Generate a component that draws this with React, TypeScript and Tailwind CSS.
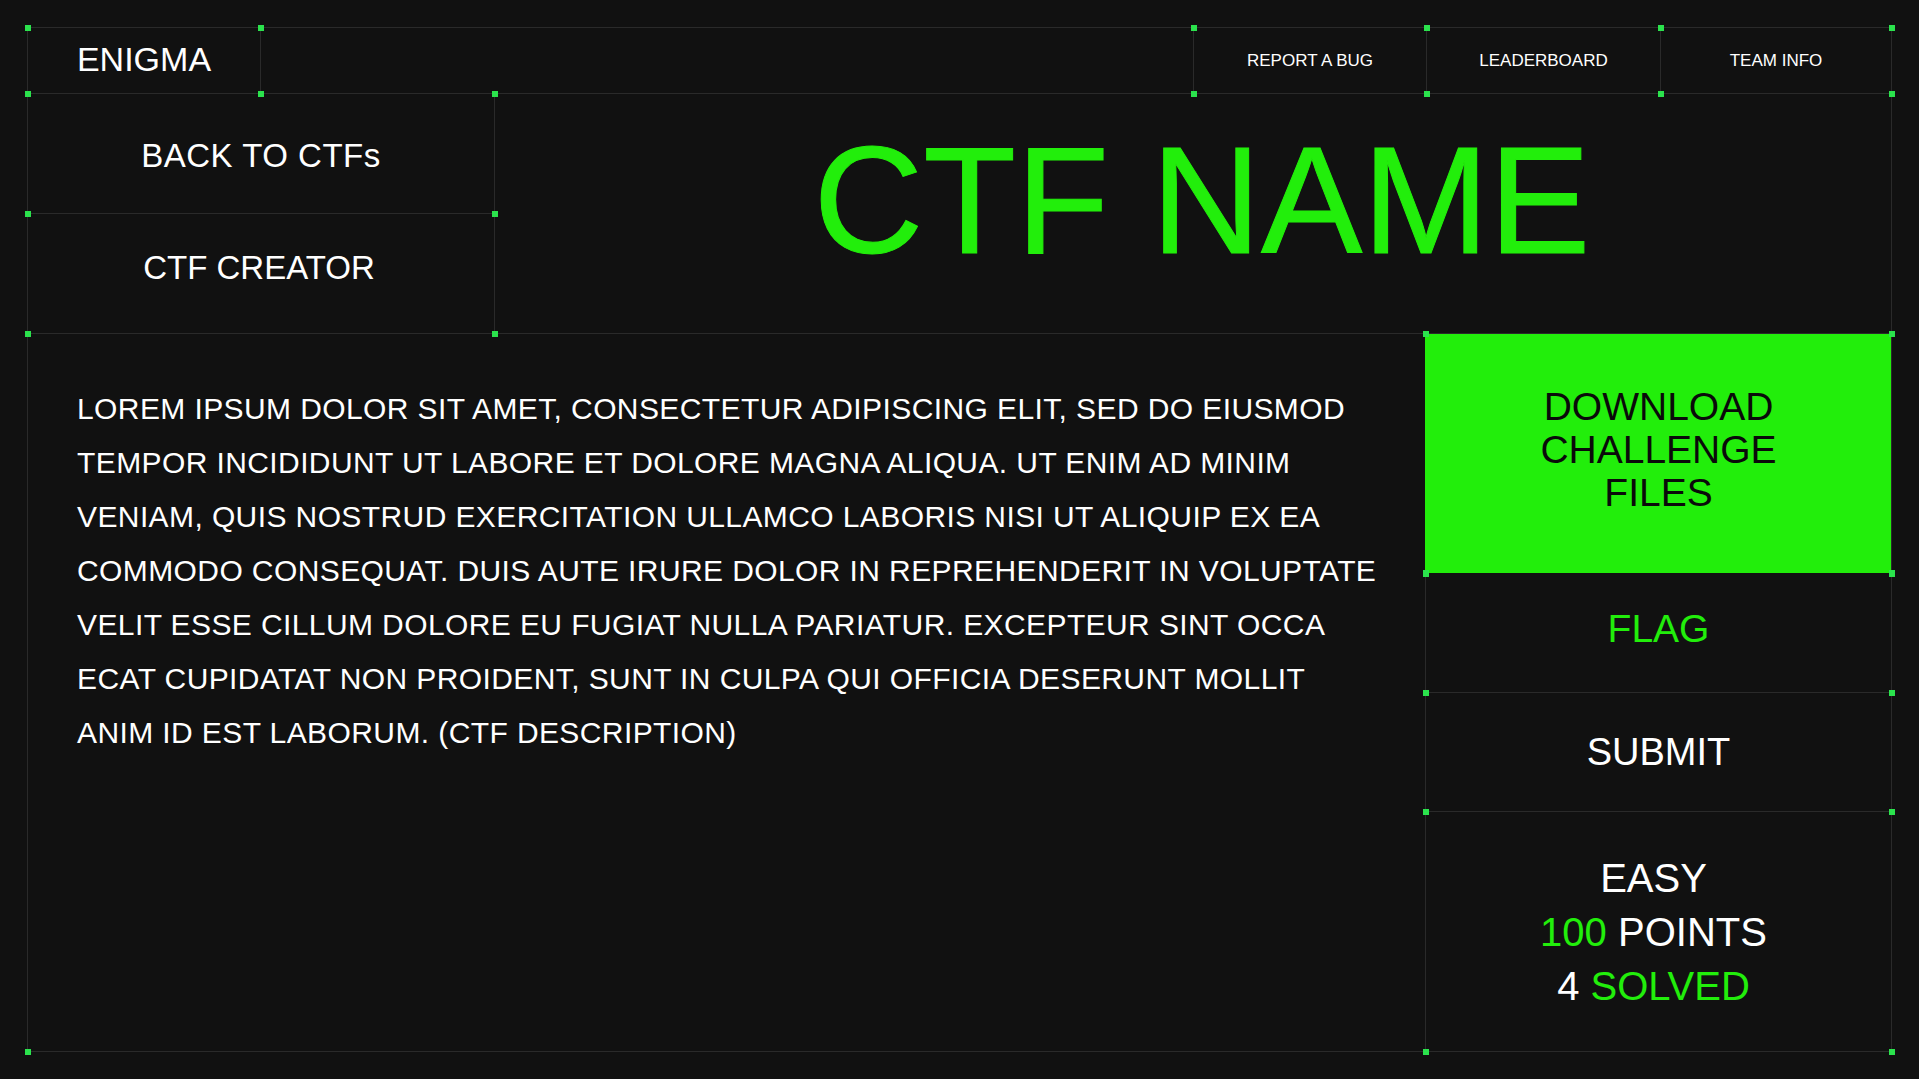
import React from "react";

const LINES = [
  "LOREM IPSUM DOLOR SIT AMET, CONSECTETUR ADIPISCING ELIT, SED DO EIUSMOD",
  "TEMPOR INCIDIDUNT UT LABORE ET DOLORE MAGNA ALIQUA. UT ENIM AD MINIM",
  "VENIAM, QUIS NOSTRUD EXERCITATION ULLAMCO LABORIS NISI UT ALIQUIP EX EA",
  "COMMODO CONSEQUAT. DUIS AUTE IRURE DOLOR IN REPREHENDERIT IN VOLUPTATE",
  "VELIT ESSE CILLUM DOLORE EU FUGIAT NULLA PARIATUR. EXCEPTEUR SINT OCCA",
  "ECAT CUPIDATAT NON PROIDENT, SUNT IN CULPA QUI OFFICIA DESERUNT MOLLIT",
  "ANIM ID EST LABORUM. (CTF DESCRIPTION)",
];

const NAV = [
  { label: "REPORT A BUG", w: "w-[233px]" },
  { label: "LEADERBOARD", w: "w-[234px]" },
  { label: "TEAM INFO", w: "w-[231px]" },
];

// little green squares sitting on the grid intersections
function Dot({ pos }: { pos: string }) {
  return <span className={`absolute z-10 h-[6px] w-[6px] bg-[#2be34d] ${pos}`} />;
}

function Corners() {
  return (
    <>
      <Dot pos="-left-[3px] -top-[3px]" />
      <Dot pos="-right-[4px] -top-[3px]" />
      <Dot pos="-left-[3px] -bottom-[4px]" />
      <Dot pos="-right-[4px] -bottom-[4px]" />
    </>
  );
}

export default function App() {
  return (
    <div className="h-[1079px] w-[1919px] bg-[#111111] p-[27px] font-['Liberation_Sans',Arial,sans-serif] text-white">
      <div className="flex h-[1025px] w-[1865px] flex-col border border-[#2a2a2a]">
        {/* Header */}
        <div className="flex h-[66px] shrink-0 border-b border-[#2a2a2a]">
          <div className="relative flex w-[233px] items-center justify-center border-r border-[#2a2a2a] pb-[3px] text-[34px] leading-none">
            <Corners />
            ENIGMA
          </div>
          <div className="flex-1" />
          {NAV.map((n) => (
            <div
              key={n.label}
              className={`relative flex items-center justify-center border-l border-[#2a2a2a] text-[17px] leading-none ${n.w}`}
            >
              <Corners />
              {n.label}
            </div>
          ))}
        </div>

        {/* Sidebar + title */}
        <div className="flex h-[240px] shrink-0 border-b border-[#2a2a2a]">
          <div className="flex w-[467px] flex-col border-r border-[#2a2a2a]">
            <div className="relative flex h-[120px] items-center justify-center border-b border-[#2a2a2a] pt-[4px] text-[33px] leading-none tracking-[0.5px]">
              <Corners />
              BACK TO CTFs
            </div>
            <div className="relative flex flex-1 items-center justify-center pb-[12px] pr-[4px] text-[33px] leading-none">
              <Corners />
              CTF CREATOR
            </div>
          </div>
          <div className="flex flex-1 items-center justify-center pb-[28px] pl-[18px]">
            <h1 className="text-[152px] leading-none text-[#22ee0b] [-webkit-text-stroke:1px_#22ee0b]">CTF NAME</h1>
          </div>
        </div>

        {/* Description + actions */}
        <div className="flex flex-1">
          <div className="relative flex-1 pl-[49px] pt-[48px]">
            <Dot pos="-left-[3px] -bottom-[4px]" />
            {LINES.map((l) => (
              <p key={l} className="text-[30px] leading-[54px] tracking-[0.4px]">
                {l}
              </p>
            ))}
          </div>

          <div className="flex w-[466px] flex-col">
            <button className="relative flex h-[239px] flex-col items-center justify-center border-l border-[#22ee0b] bg-[#22ee0b] pb-[8px] text-[39px] leading-[43px] text-[#0a0a0a]">
              <Corners />
              <span>DOWNLOAD</span>
              <span>CHALLENGE</span>
              <span>FILES</span>
            </button>
            <div className="relative flex h-[120px] items-center justify-center border-b border-l border-[#2a2a2a] pb-[8px] text-[39px] leading-none text-[#22ee0b]">
              <Corners />
              FLAG
            </div>
            <div className="relative flex h-[119px] items-center justify-center border-b border-l border-[#2a2a2a] text-[38px] leading-none">
              <Corners />
              SUBMIT
            </div>
            <div className="relative flex flex-1 flex-col items-center justify-center border-l border-[#2a2a2a] pr-[10px] text-[40px] leading-[54px]">
              <Corners />
              <span>EASY</span>
              <span>
                <span className="text-[#22ee0b]">100</span> POINTS
              </span>
              <span>
                4 <span className="text-[#22ee0b]">SOLVED</span>
              </span>
            </div>
          </div>
        </div>
      </div>
    </div>
  );
}
